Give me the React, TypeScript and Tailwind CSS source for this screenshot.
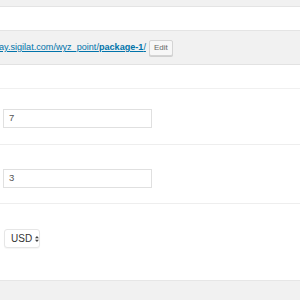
import React from 'react'

const App = () => {
  return (
    <div className="w-[300px] h-[300px] overflow-hidden bg-white font-['Liberation_Sans',Arial,sans-serif]">
      {/* top strip */}
      <div className="h-[7px] bg-[#f1f1f1] border-b border-[#e4e4e4]" />
      <div className="h-[24px] bg-white border-b border-[#e4e4e4]" />

      {/* permalink bar */}
      <div className="h-[34px] bg-[#f1f1f1] border-b border-[#e2e2e2] flex items-center">
        <a className="text-[9.1px] text-[#0073aa] underline whitespace-nowrap -ml-[1px] mr-[3px] leading-none">
          ay.sigilat.com/wyz_point/<span className="font-bold">package-1</span>/
        </a>
        <button className="h-[16px] w-[24px] text-[8px] text-[#666] bg-[#f7f7f7] border border-[#d4d4d4] rounded-[2px] shadow-[0_1px_0_#d0d0d0] leading-none">
          Edit
        </button>
      </div>

      {/* fields */}
      <div className="h-[24px] border-b border-[#f0f0f0]" />
      <div className="pt-[20px] pb-[16px] border-b border-[#eeeeee]">
        <div className="ml-[3px] w-[149px] h-[19px] border border-[#e0e0e0] bg-white flex items-center pl-[5px] text-[9.5px] text-[#555]">
          7
        </div>
      </div>
      <div className="pt-[24px] pb-[15px] border-b border-[#eeeeee]">
        <div className="ml-[3px] w-[149px] h-[19px] border border-[#e0e0e0] bg-white flex items-center pl-[5px] text-[9.5px] text-[#555]">
          3
        </div>
      </div>
      <div className="pt-[25px] pb-[32px] border-b border-[#e6e6e6]">
        <div className="ml-[4px] w-[36px] h-[19px] border border-[#e6e6e6] rounded-[3px] bg-white shadow-[0_1px_1px_rgba(0,0,0,0.04)] flex items-center pl-[6px] gap-[3px] text-[10px] text-[#333]">
          <span>USD</span>
          <svg width="5" height="8" viewBox="0 0 5 8">
            <path d="M2.5 0 L5 3 L0 3 Z" fill="#444" />
            <path d="M2.5 8 L5 5 L0 5 Z" fill="#444" />
          </svg>
        </div>
      </div>
      <div className="h-[30px] bg-[#f1f1f1]" />
    </div>
  )
}

export default App
